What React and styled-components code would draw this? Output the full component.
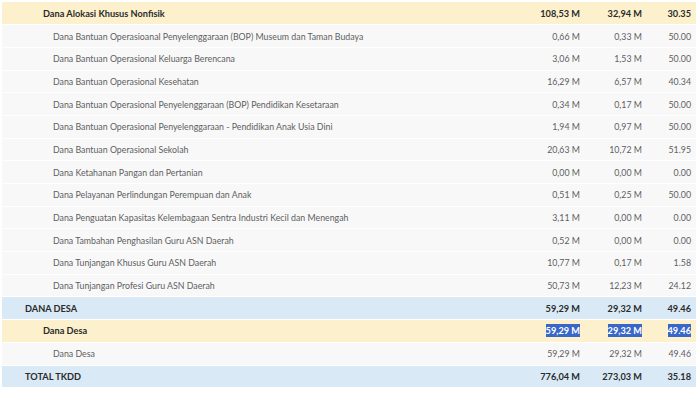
import React from 'react'
import styled, { createGlobalStyle } from 'styled-components'

const rows = [
  { level: 'group', name: 'Dana Alokasi Khusus Nonfisik', pagu: '108,53 M', real: '32,94 M', pct: '30.35' },
  { level: 'item', name: 'Dana Bantuan Operasioanal Penyelenggaraan (BOP) Museum dan Taman Budaya', pagu: '0,66 M', real: '0,33 M', pct: '50.00' },
  { level: 'item', name: 'Dana Bantuan Operasional Keluarga Berencana', pagu: '3,06 M', real: '1,53 M', pct: '50.00' },
  { level: 'item', name: 'Dana Bantuan Operasional Kesehatan', pagu: '16,29 M', real: '6,57 M', pct: '40.34' },
  { level: 'item', name: 'Dana Bantuan Operasional Penyelenggaraan (BOP) Pendidikan Kesetaraan', pagu: '0,34 M', real: '0,17 M', pct: '50.00' },
  { level: 'item', name: 'Dana Bantuan Operasional Penyelenggaraan - Pendidikan Anak Usia Dini', pagu: '1,94 M', real: '0,97 M', pct: '50.00' },
  { level: 'item', name: 'Dana Bantuan Operasional Sekolah', pagu: '20,63 M', real: '10,72 M', pct: '51.95' },
  { level: 'item', name: 'Dana Ketahanan Pangan dan Pertanian', pagu: '0,00 M', real: '0,00 M', pct: '0.00' },
  { level: 'item', name: 'Dana Pelayanan Perlindungan Perempuan dan Anak', pagu: '0,51 M', real: '0,25 M', pct: '50.00' },
  { level: 'item', name: 'Dana Penguatan Kapasitas Kelembagaan Sentra Industri Kecil dan Menengah', pagu: '3,11 M', real: '0,00 M', pct: '0.00' },
  { level: 'item', name: 'Dana Tambahan Penghasilan Guru ASN Daerah', pagu: '0,52 M', real: '0,00 M', pct: '0.00' },
  { level: 'item', name: 'Dana Tunjangan Khusus Guru ASN Daerah', pagu: '10,77 M', real: '0,17 M', pct: '1.58' },
  { level: 'item', name: 'Dana Tunjangan Profesi Guru ASN Daerah', pagu: '50,73 M', real: '12,23 M', pct: '24.12' },
  { level: 'top', name: 'DANA DESA', pagu: '59,29 M', real: '29,32 M', pct: '49.46' },
  { level: 'group', name: 'Dana Desa', pagu: '59,29 M', real: '29,32 M', pct: '49.46', selected: true },
  { level: 'item', name: 'Dana Desa', pagu: '59,29 M', real: '29,32 M', pct: '49.46' },
  { level: 'top', name: 'TOTAL TKDD', pagu: '776,04 M', real: '273,03 M', pct: '35.18' },
]

const backgrounds = { top: '#d9eaf6', group: '#fcf1cc', item: '#f8f8f9' }
const indents = { top: 23, group: 41, item: 51 }

export default function App () {
  return <>
    <GlobalStyle />
    <Page>
      <Table>
        <tbody>
          {
            rows.map((row, i) => <Row key={i} $level={row.level}>
              <NameCell $level={row.level}>{ row.name }</NameCell>
              <NumCell $w={120}><Value $selected={row.selected}>{ row.pagu }</Value></NumCell>
              <NumCell $w={62}><Value $selected={row.selected}>{ row.real }</Value></NumCell>
              <NumCell $w={49} $pr={5}><Value $selected={row.selected}>{ row.pct }</Value></NumCell>
            </Row>)
          }
        </tbody>
      </Table>
    </Page>
  </>
}

const GlobalStyle = createGlobalStyle`
  body {
    margin: 0;
    background: #fff;
    font-family: Lato, "Noto Sans", sans-serif;
  }
`

const Page = styled('div')`
  padding: 2px 4px 0 2px;
`

const Table = styled('table')`
  width: 100%;
  border-collapse: collapse;
`

const Row = styled('tr')`
  height: 22.7px;
  background: ${p => backgrounds[p.$level]};
  border-bottom: 1px solid #fff;
  color: ${p => p.$level === 'item' ? '#5e5e5e' : '#2b2b2b'};
  font-weight: ${p => p.$level === 'item' ? 400 : 700};
  font-size: ${p => p.$level === 'item' ? '8.8px' : '9.2px'};
`

const NameCell = styled('td')`
  padding: 0 0 0 ${p => indents[p.$level]}px;
  white-space: nowrap;
`

const NumCell = styled('td')`
  width: ${p => p.$w}px;
  padding: 0 ${p => p.$pr || 0}px 0 0;
  text-align: right;
  white-space: nowrap;
`

const Value = styled('span')`
  padding: 1px 0;
  ${p => p.$selected && `
    background: #3867c9;
    color: #fff;
  `}
`
